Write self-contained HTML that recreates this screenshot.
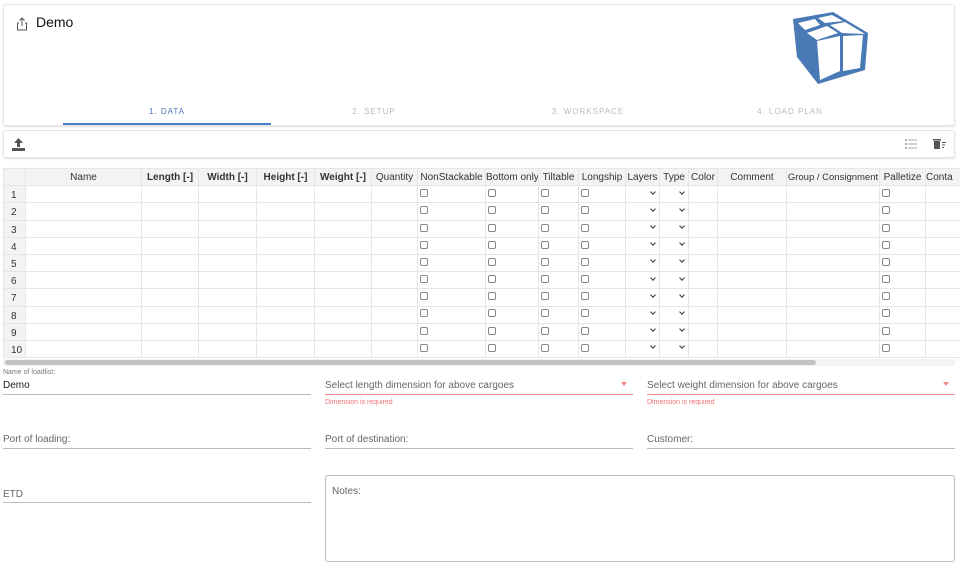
<!DOCTYPE html><html><head><style>
*{box-sizing:border-box;margin:0;padding:0}
body{width:960px;height:568px;background:#fff;font-family:"Liberation Sans",sans-serif;position:relative;overflow:hidden;color:#222}
.a{position:absolute}
.card{border:1px solid #e4e4e4;border-radius:3px;box-shadow:0 1px 2px rgba(0,0,0,.12)}
table{border-collapse:collapse;table-layout:fixed;font-size:10px}
td,th{border:1px solid #e6e6e6;height:17.2px;padding:0;overflow:hidden;white-space:nowrap;text-align:center;font-weight:normal;color:#333;vertical-align:middle}
th{background:#f3f3f3}
th.b{font-weight:bold}
td.n{background:#f3f3f3;text-align:left;padding-left:7px;padding-top:3px}
.cbl{text-align:left;padding-left:2px}
.cb{display:inline-block;width:8px;height:8px;border:1px solid #888;border-radius:2px;vertical-align:middle;margin-top:-2px}
.dd{text-align:right;padding-right:4px}
.dd i{display:inline-block;width:4px;height:4px;border-right:1.3px solid #333;border-bottom:1.3px solid #333;transform:rotate(45deg);margin-top:-5px;vertical-align:middle}
.tab{font-size:8px;letter-spacing:1px;color:#bbb;top:107px;width:120px;text-align:center}
.lbl{font-size:10px;color:#666}
.line{height:1px;background:#bbb}
</style></head><body>
<div class="a card" style="left:3px;top:4px;width:952px;height:122px"></div>
<svg class="a" style="left:16px;top:17px" width="12" height="14" viewBox="0 0 12 14"><path d="M6 1v8M3.5 3.5L6 1l2.5 2.5M3 6H1.5v7h9V6H9" fill="none" stroke="#555" stroke-width="1"/></svg>
<div class="a" style="left:36px;top:14px;font-size:14px;color:#111">Demo</div>
<svg class="a" style="left:790px;top:10px" width="80" height="76" viewBox="790 10 80 76">
<polygon points="793,19 833,12 868,33 865,70 818,84 797,57" fill="#4a7ab5"/>
<g fill="#fff">
<polygon points="798,23 815,19 820,25 805,30"/>
<polygon points="818,18 832,15 843,21 825,23"/>
<polygon points="807,33 827,26 838,33 817,40"/>
<polygon points="830,25 845,22 865,34 842,33"/>
<polygon points="817,41 840,36 840,71 820,80"/>
<polygon points="843,36 863,35 860,68 843,71"/>
</g>
</svg>
<div class="a tab" style="left:107px;color:#4a76b8">1. DATA</div>
<div class="a" style="left:63px;top:123px;width:208px;height:2px;background:#4a7fc8"></div>
<div class="a tab" style="left:314px">2. SETUP</div>
<div class="a tab" style="left:528px">3. WORKSPACE</div>
<div class="a tab" style="left:730px">4. LOAD PLAN</div>
<div class="a card" style="left:3px;top:130px;width:952px;height:28px"></div>
<svg class="a" style="left:11px;top:137px" width="15" height="15" viewBox="0 0 15 15"><path d="M7.5 1L3 6h3v4h3V6h3z" fill="#555"/><rect x="1" y="11" width="13" height="3" fill="#555"/></svg>
<svg class="a" style="left:905px;top:139px" width="12" height="10" viewBox="0 0 12 10"><g fill="#aaa"><rect x="0" y="0" width="2" height="2"/><rect x="0" y="4" width="2" height="2"/><rect x="0" y="8" width="2" height="2"/><rect x="3" y="0.5" width="9" height="1"/><rect x="3" y="4.5" width="9" height="1"/><rect x="3" y="8.5" width="9" height="1"/></g></svg>
<svg class="a" style="left:933px;top:138px" width="13" height="12" viewBox="0 0 13 12"><g fill="#555"><rect x="0" y="1" width="8" height="1.5"/><rect x="1" y="3" width="6" height="8"/><rect x="9" y="4" width="4" height="1"/><rect x="9" y="6.5" width="3" height="1"/><rect x="9" y="9" width="2" height="1"/></g></svg>
<table class="a" style="left:3px;top:168px;width:970px">
<colgroup><col style="width:22px"><col style="width:116px"><col style="width:57px"><col style="width:58px"><col style="width:58px"><col style="width:57px"><col style="width:46px"><col style="width:68px"><col style="width:53px"><col style="width:40px"><col style="width:47px"><col style="width:34px"><col style="width:29px"><col style="width:29px"><col style="width:69px"><col style="width:93px"><col style="width:46px"><col style="width:48px"></colgroup>
<tr><th></th><th>Name</th><th class="b">Length [-]</th><th class="b">Width [-]</th><th class="b">Height [-]</th><th class="b">Weight [-]</th><th>Quantity</th><th>NonStackable</th><th>Bottom only</th><th>Tiltable</th><th>Longship</th><th>Layers</th><th>Type</th><th>Color</th><th>Comment</th><th style="font-size:9.5px">Group / Consignment</th><th>Palletize</th><th style="text-align:left">Conta</th></tr>
<tr><td class="n">1</td><td></td><td></td><td></td><td></td><td></td><td></td><td class="cbl"><span class="cb"></span></td><td class="cbl"><span class="cb"></span></td><td class="cbl"><span class="cb"></span></td><td class="cbl"><span class="cb"></span></td><td class="dd"><i></i></td><td class="dd"><i></i></td><td></td><td></td><td></td><td class="cbl"><span class="cb"></span></td><td></td></tr>
<tr><td class="n">2</td><td></td><td></td><td></td><td></td><td></td><td></td><td class="cbl"><span class="cb"></span></td><td class="cbl"><span class="cb"></span></td><td class="cbl"><span class="cb"></span></td><td class="cbl"><span class="cb"></span></td><td class="dd"><i></i></td><td class="dd"><i></i></td><td></td><td></td><td></td><td class="cbl"><span class="cb"></span></td><td></td></tr>
<tr><td class="n">3</td><td></td><td></td><td></td><td></td><td></td><td></td><td class="cbl"><span class="cb"></span></td><td class="cbl"><span class="cb"></span></td><td class="cbl"><span class="cb"></span></td><td class="cbl"><span class="cb"></span></td><td class="dd"><i></i></td><td class="dd"><i></i></td><td></td><td></td><td></td><td class="cbl"><span class="cb"></span></td><td></td></tr>
<tr><td class="n">4</td><td></td><td></td><td></td><td></td><td></td><td></td><td class="cbl"><span class="cb"></span></td><td class="cbl"><span class="cb"></span></td><td class="cbl"><span class="cb"></span></td><td class="cbl"><span class="cb"></span></td><td class="dd"><i></i></td><td class="dd"><i></i></td><td></td><td></td><td></td><td class="cbl"><span class="cb"></span></td><td></td></tr>
<tr><td class="n">5</td><td></td><td></td><td></td><td></td><td></td><td></td><td class="cbl"><span class="cb"></span></td><td class="cbl"><span class="cb"></span></td><td class="cbl"><span class="cb"></span></td><td class="cbl"><span class="cb"></span></td><td class="dd"><i></i></td><td class="dd"><i></i></td><td></td><td></td><td></td><td class="cbl"><span class="cb"></span></td><td></td></tr>
<tr><td class="n">6</td><td></td><td></td><td></td><td></td><td></td><td></td><td class="cbl"><span class="cb"></span></td><td class="cbl"><span class="cb"></span></td><td class="cbl"><span class="cb"></span></td><td class="cbl"><span class="cb"></span></td><td class="dd"><i></i></td><td class="dd"><i></i></td><td></td><td></td><td></td><td class="cbl"><span class="cb"></span></td><td></td></tr>
<tr><td class="n">7</td><td></td><td></td><td></td><td></td><td></td><td></td><td class="cbl"><span class="cb"></span></td><td class="cbl"><span class="cb"></span></td><td class="cbl"><span class="cb"></span></td><td class="cbl"><span class="cb"></span></td><td class="dd"><i></i></td><td class="dd"><i></i></td><td></td><td></td><td></td><td class="cbl"><span class="cb"></span></td><td></td></tr>
<tr><td class="n">8</td><td></td><td></td><td></td><td></td><td></td><td></td><td class="cbl"><span class="cb"></span></td><td class="cbl"><span class="cb"></span></td><td class="cbl"><span class="cb"></span></td><td class="cbl"><span class="cb"></span></td><td class="dd"><i></i></td><td class="dd"><i></i></td><td></td><td></td><td></td><td class="cbl"><span class="cb"></span></td><td></td></tr>
<tr><td class="n">9</td><td></td><td></td><td></td><td></td><td></td><td></td><td class="cbl"><span class="cb"></span></td><td class="cbl"><span class="cb"></span></td><td class="cbl"><span class="cb"></span></td><td class="cbl"><span class="cb"></span></td><td class="dd"><i></i></td><td class="dd"><i></i></td><td></td><td></td><td></td><td class="cbl"><span class="cb"></span></td><td></td></tr>
<tr><td class="n">10</td><td></td><td></td><td></td><td></td><td></td><td></td><td class="cbl"><span class="cb"></span></td><td class="cbl"><span class="cb"></span></td><td class="cbl"><span class="cb"></span></td><td class="cbl"><span class="cb"></span></td><td class="dd"><i></i></td><td class="dd"><i></i></td><td></td><td></td><td></td><td class="cbl"><span class="cb"></span></td><td></td></tr>
</table>
<div class="a" style="left:3px;top:359px;width:952px;height:7px;background:#f3f3f3"></div>
<div class="a" style="left:5px;top:360px;width:811px;height:5px;background:#c4c4c4;border-radius:3px"></div>
<div class="a" style="left:3px;top:369px;font-size:7px;color:#777">Name of loadlist:</div>
<div class="a" style="left:3px;top:380px;font-size:10px;color:#222">Demo</div>
<div class="a line" style="left:3px;top:394px;width:308px"></div>
<div class="a lbl" style="left:325px;top:380px">Select length dimension for above cargoes</div>
<div class="a" style="left:621px;top:382px;border:3px solid transparent;border-top:4px solid #f28a8a"></div>
<div class="a" style="left:325px;top:394px;width:308px;height:1px;background:#f28a8a"></div>
<div class="a" style="left:325px;top:399px;font-size:7px;color:#f07070">Dimension is required</div>
<div class="a lbl" style="left:647px;top:380px">Select weight dimension for above cargoes</div>
<div class="a" style="left:943px;top:382px;border:3px solid transparent;border-top:4px solid #f28a8a"></div>
<div class="a" style="left:647px;top:394px;width:308px;height:1px;background:#f28a8a"></div>
<div class="a" style="left:647px;top:399px;font-size:7px;color:#f07070">Dimension is required</div>
<div class="a lbl" style="left:3px;top:434px">Port of loading:</div>
<div class="a line" style="left:3px;top:448px;width:308px"></div>
<div class="a lbl" style="left:325px;top:434px">Port of destination:</div>
<div class="a line" style="left:325px;top:448px;width:308px"></div>
<div class="a lbl" style="left:647px;top:434px">Customer:</div>
<div class="a line" style="left:647px;top:448px;width:308px"></div>
<div class="a lbl" style="left:3px;top:489px">ETD</div>
<div class="a line" style="left:3px;top:502px;width:308px"></div>
<div class="a" style="left:325px;top:475px;width:630px;height:87px;border:1px solid #bbb;border-radius:3px"></div>
<div class="a lbl" style="left:332px;top:486px">Notes:</div>
</body></html>
